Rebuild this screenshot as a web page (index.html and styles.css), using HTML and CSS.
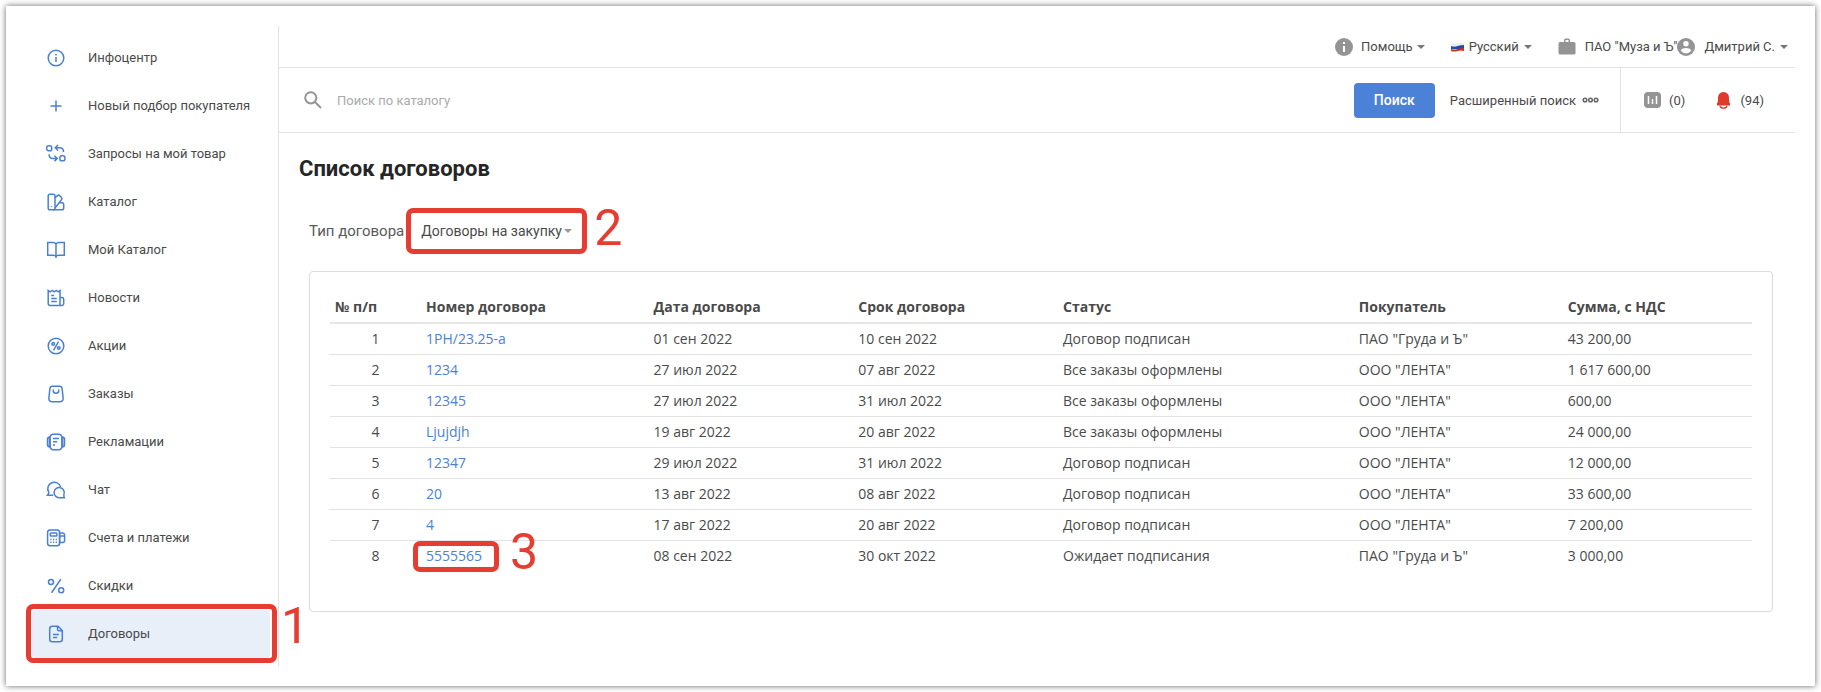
FILE: index.html
```html
<!DOCTYPE html>
<html lang="ru">
<head>
    <meta charset="UTF-8">
    <meta name="viewport" content="width=device-width, initial-scale=1.0">
    <title>Список договоров</title>
    <link rel="stylesheet" href="styles.css">
</head>
<body>
    <div class="window">
        <nav class="sidebar">
            <a class="nav-item" href="#">
                <svg class="nav-icon" viewBox="0 0 20 20"><circle cx="10" cy="10" r="7.8"/><path d="M10 9v5M10 6v1.4"/></svg>
                <span class="nav-text">Инфоцентр</span>
            </a>
            <a class="nav-item" href="#">
                <svg class="nav-icon" viewBox="0 0 20 20"><path d="M10 4.5v11M4.5 10h11"/></svg>
                <span class="nav-text">Новый подбор покупателя</span>
            </a>
            <a class="nav-item" href="#">
                <svg class="nav-icon" viewBox="0 0 20 20"><rect x="0.7" y="1.7" width="5" height="5" rx="1.8"/><rect x="13.9" y="11.8" width="5" height="5" rx="1.8"/><path d="M12 1L9.3 3.8 12 6.500M9.500 3.800h4q4 0 4 4.200M3 10.200q0 4.200 4 4.200h4M8.500 11.700l2.700 2.700-2.700 2.700"/></svg>
                <span class="nav-text">Запросы на мой товар</span>
            </a>
            <a class="nav-item" href="#">
                <svg class="nav-icon" viewBox="0 0 20 20"><rect x="2.200" y="2.200" width="6.800" height="15.600" rx="1.800"/><path d="M9 5.800l2.500-2.200q1.200-1 2.200.1l1.800 1.900q.9 1.100 0 2.200L9 16M13.500 10.800h2.600q1.600 0 1.600 1.600v3.600q0 1.800-1.800 1.800H7M5.500 14v.8"/></svg>
                <span class="nav-text">Каталог</span>
            </a>
            <a class="nav-item" href="#">
                <svg class="nav-icon" viewBox="0 0 20 20"><path d="M10 4Q9 2.500 7 2.500H1.700v12.700H7.500Q9.300 15.200 10 16.500 10.700 15.200 12.500 15.200h5.800V2.500H13Q11 2.500 10 4zM10 4v14"/></svg>
                <span class="nav-text">Мой Каталог</span>
            </a>
            <a class="nav-item" href="#">
                <svg class="nav-icon" viewBox="0 0 20 20"><path d="M14 17.500H4.500q-2.300 0-2.300-2.300V2.500l2 1.400 2-1.400 2 1.400 2-1.400 2 1.400 1.800-1.400v15M14 9.500h2q1.700 0 1.700 1.700v4.600q0 1.700-1.700 1.700h-2M5.200 7.500h3M5.200 10.500h5.600M5.200 13.500h5.600"/></svg>
                <span class="nav-text">Новости</span>
            </a>
            <a class="nav-item" href="#">
                <svg class="nav-icon" viewBox="0 0 20 20"><circle cx="10" cy="10" r="7.800"/><path d="M12.500 5.700l-5 8.600"/><circle cx="7.200" cy="7.900" r="1.300"/><circle cx="12.800" cy="12" r="1.300"/></svg>
                <span class="nav-text">Акции</span>
            </a>
            <a class="nav-item" href="#">
                <svg class="nav-icon" viewBox="0 0 20 20"><path d="M6.500 2.200h7q2.300 0 2.600 2.300l1 9.300q.4 4-3.400 4H6.300q-3.800 0-3.400-4l1-9.300q.3-2.300 2.600-2.300zM7.300 5.500v1.300q0 2.500 2.700 2.500t2.700-2.500V5.500"/></svg>
                <span class="nav-text">Заказы</span>
            </a>
            <a class="nav-item" href="#">
                <svg class="nav-icon" viewBox="0 0 20 20"><path class="tint" d="M4 5q-2.500 0-2.500 2.500v5Q1.500 15 4 15zM16 5q2.500 0 2.500 2.500v5q0 2.500-2.500 2.500z"/><path d="M6.500 2.200h7Q16 3.200 16 5.200v9.600q0 2-2.500 3h-7Q4 16.800 4 14.800V5.200q0-2 2.500-3zM7 6.500h6M7 9.800h4.200M7 13h2"/></svg>
                <span class="nav-text">Рекламации</span>
            </a>
            <a class="nav-item" href="#">
                <svg class="nav-icon" viewBox="0 0 20 20"><path d="M14.700 7A6.600 6.600 0 1 0 2.700 12.200v1.300L1.500 15.200h5.800M18.400 17.700h-5.200a5.100 5.100 0 1 1 4.700-3.200v1.900z"/></svg>
                <span class="nav-text">Чат</span>
            </a>
            <a class="nav-item" href="#">
                <svg class="nav-icon" viewBox="0 0 20 20"><rect x="1.600" y="2" width="12" height="15.800" rx="2.500"/><rect x="4.300" y="5" width="6.600" height="3" rx=".8"/><path d="M13.600 5h3.400q1.600.4 1.600 2v5.500q0 2-2 2h-3zM13.600 8h4.800"/><path d="M4.300 11.500h1.200M7 11.500h1.200M9.700 11.500h1.200M4.300 14.300h1.200M7 14.300h1.200M9.700 14.300h1.200"/></svg>
                <span class="nav-text">Счета и платежи</span>
            </a>
            <a class="nav-item" href="#">
                <svg class="nav-icon" viewBox="0 0 20 20"><circle cx="5" cy="6" r="2.500"/><circle cx="15.200" cy="14.300" r="2.500"/><path d="M14.800 3.300L5.500 16.800"/></svg>
                <span class="nav-text">Скидки</span>
            </a>
            <a class="nav-item active" href="#">
                <svg class="nav-icon" viewBox="0 0 20 20"><path d="M12 2.200H6.200q-2.500 0-2.500 2.500v10.600q0 2.500 2.500 2.500h7.600q2.500 0 2.500-2.500V6.500zM11.500 2.500v2.700q0 1.600 1.600 1.600h3M7 10.500h6M7 13.600h4.200"/></svg>
                <span class="nav-text">Договоры</span>
                <span class="mark mark-nav"></span>
                <span class="mark-number number-nav">1</span>
            </a>
        </nav>

        <main class="main">
            <header class="topbar">
                <button class="top-button help">
                    <svg class="top-icon" viewBox="0 0 18 18"><circle cx="9" cy="9" r="9"/><path fill="#fff" d="M8 4h2v2H8zM8 8h2v6H8z"/></svg>
                    <span>Помощь</span>
                    <span class="caret"></span>
                </button>
                <button class="top-button language">
                    <svg class="flag" viewBox="0 0 13 10"><path fill="#eee" d="M0 1q3 1 6.500 0T13 1v3H0z"/><path fill="#1f4fa3" d="M0 4q3 1 6.500 0T13 3v4H0z"/><path fill="#d52b1e" d="M0 7q3 1 6.500 0T13 6v3q-3-1-6.500 0T0 9z"/></svg>
                    <span>Русский</span>
                    <span class="caret"></span>
                </button>
                <button class="top-button company">
                    <svg class="top-icon" viewBox="0 0 18 18"><path fill-rule="evenodd" d="M6 4V2q0-1.500 1.500-1.500h3Q12 .5 12 2v2h4q1.500 0 1.500 1.500V15q0 1.500-1.500 1.500H2Q.5 16.500.5 15V5.500Q.5 4 2 4zM7.500 4h3V2h-3z"/></svg>
                    <span>ПАО "Муза и Ъ"</span>
                </button>
                <button class="top-button user">
                    <svg class="top-icon" viewBox="0 0 18 18"><circle cx="9" cy="9" r="9"/><circle cx="9" cy="5.700" r="2.700" fill="#fff"/><path fill="#fff" d="M3.600 12.200Q5.200 9.900 9 9.900t5.400 2.300Q12.500 15.300 9 15.300t-5.400-3.100z"/></svg>
                    <span>Дмитрий С.</span>
                    <span class="caret"></span>
                </button>
            </header>

            <div class="searchbar">
                <form class="search">
                    <label for="search"><svg class="search-icon" viewBox="0 0 18 18"><circle cx="6.800" cy="6.800" r="5.600"/><path d="M11 11l6 6"/></svg></label>
                    <input class="search-input" id="search" type="text" placeholder="Поиск по каталогу" aria-label="Поиск по каталогу">
                    <button class="search-button" type="button">Поиск</button>
                    <a class="advanced" href="#">
                        <span>Расширенный поиск</span>
                        <svg class="dots" viewBox="0 0 17 6"><circle cx="3" cy="3" r="1.800"/><circle cx="8.500" cy="3" r="1.800"/><circle cx="14" cy="3" r="1.800"/></svg>
                    </a>
                </form>
                <div class="counters">
                    <a class="counter" href="#">
                        <svg class="counter-icon" viewBox="0 0 17 17"><rect width="17" height="16" rx="4"/><path stroke="#fff" stroke-width="1.500" d="M4.500 4v8M8.500 7v5M12.500 4v8"/></svg>
                        <span>(0)</span>
                    </a>
                    <a class="counter" href="#">
                        <svg class="counter-icon bell" viewBox="0 0 17 17"><path d="M8.500 0q5.500.3 5.500 6 0 4.500 1 5.500v2H2v-2q1-1 1-5.500Q3 .3 8.500 0z"/><path class="clapper" d="M5 14q.6 2.200 3.500 2.200T12 14"/></svg>
                        <span>(94)</span>
                    </a>
                </div>
            </div>

            <section class="content">
                <h1 class="title">Список договоров</h1>
                <div class="filter">
                    <label for="type">Тип договора</label>
                    <div class="select-wrap">
                        <select class="select" id="type">
                            <option>Договоры на закупку</option>
                        </select>
                        <span class="caret"></span>
                        <span class="mark mark-select"></span>
                        <span class="mark-number number-select">2</span>
                    </div>
                </div>

                <div class="panel">
                    <table class="contracts">
                        <colgroup>
                            <col class="col-index">
                            <col class="col-number">
                            <col class="col-date">
                            <col class="col-date">
                            <col class="col-status">
                            <col class="col-buyer">
                            <col>
                        </colgroup>
                        <thead>
                            <tr><th>№ п/п</th><th>Номер договора</th><th>Дата договора</th><th>Срок договора</th><th>Статус</th><th>Покупатель</th><th>Сумма, с НДС</th></tr>
                        </thead>
                        <tbody>
                            <tr><td>1</td><td><a href="#">1PH/23.25-a</a></td><td>01 сен 2022</td><td>10 сен 2022</td><td>Договор подписан</td><td>ПАО "Груда и Ъ"</td><td>43 200,00</td></tr>
                            <tr><td>2</td><td><a href="#">1234</a></td><td>27 июл 2022</td><td>07 авг 2022</td><td>Все заказы оформлены</td><td>ООО "ЛЕНТА"</td><td>1 617 600,00</td></tr>
                            <tr><td>3</td><td><a href="#">12345</a></td><td>27 июл 2022</td><td>31 июл 2022</td><td>Все заказы оформлены</td><td>ООО "ЛЕНТА"</td><td>600,00</td></tr>
                            <tr><td>4</td><td><a href="#">Ljujdjh</a></td><td>19 авг 2022</td><td>20 авг 2022</td><td>Все заказы оформлены</td><td>ООО "ЛЕНТА"</td><td>24 000,00</td></tr>
                            <tr><td>5</td><td><a href="#">12347</a></td><td>29 июл 2022</td><td>31 июл 2022</td><td>Договор подписан</td><td>ООО "ЛЕНТА"</td><td>12 000,00</td></tr>
                            <tr><td>6</td><td><a href="#">20</a></td><td>13 авг 2022</td><td>08 авг 2022</td><td>Договор подписан</td><td>ООО "ЛЕНТА"</td><td>33 600,00</td></tr>
                            <tr><td>7</td><td><a href="#">4</a></td><td>17 авг 2022</td><td>20 авг 2022</td><td>Договор подписан</td><td>ООО "ЛЕНТА"</td><td>7 200,00</td></tr>
                            <tr><td>8</td><td><a class="marked-link" href="#">5555565<span class="mark mark-link"></span><span class="mark-number number-link">3</span></a></td><td>08 сен 2022</td><td>30 окт 2022</td><td>Ожидает подписания</td><td>ПАО "Груда и Ъ"</td><td>3 000,00</td></tr>
                        </tbody>
                    </table>
                </div>
            </section>
        </main>
    </div>
</body>
</html>
```
FILE: styles.css
```css
* { box-sizing: border-box; }
body {
    margin: 0;
    padding: 6px;
    background: white;
    font-family: Roboto, "Liberation Sans", sans-serif;
    font-size: 13px;
    color: #4a4a4a;
}
a { color: inherit; text-decoration: none; }
button, input, select {
    font: inherit;
    color: inherit;
    border: none;
    background: none;
    padding: 0;
}
button { cursor: pointer; }
svg { display: block; flex: none; }
.window {
    display: flex;
    padding: 20px 20px 20px 26px;
    background: white;
    box-shadow: 0 0 6px rgba(0, 0, 0, 0.6);
}

/* sidebar */
.sidebar {
    flex: none;
    width: 247px;
    padding: 8px 8px 8px 0;
    border-right: 1px solid #e2e2e2;
}
.nav-item {
    position: relative;
    display: flex;
    align-items: center;
    gap: 22px;
    height: 48px;
    padding-left: 14px;
    border-radius: 4px;
}
.nav-item.active { background: #e8eff9; }
.nav-text { padding-bottom: 2px; }
.nav-icon {
    width: 20px;
    height: 20px;
    fill: none;
    stroke: #4a80d4;
    stroke-width: 1.5;
}
.tint { fill: #b5cbee; }

/* top line */
.main { flex: 1; min-width: 0; }
.topbar {
    display: flex;
    justify-content: flex-end;
    align-items: center;
    height: 42px;
    padding-right: 7px;
    border-bottom: 1px solid #e2e2e2;
}
.top-button { display: flex; align-items: center; gap: 8px; }
.top-icon { width: 18px; height: 18px; fill: #949494; }
.company { gap: 9px; }
.user { gap: 9px; }
.help, .language { margin-right: 26px; }
.language { gap: 5px; }
.flag { width: 13px; height: 10px; }
.caret {
    border: 4px solid transparent;
    border-top-color: #777;
    border-bottom: none;
}
.help .caret, .user .caret { margin-left: -4px; }

/* search */
.searchbar {
    display: flex;
    height: 65px;
    border-bottom: 1px solid #e2e2e2;
}
.search {
    flex: 1;
    display: flex;
    align-items: center;
    padding: 0 21px 0 25px;
}
.search-icon {
    width: 18px;
    height: 18px;
    fill: none;
    stroke: #949494;
    stroke-width: 2;
}
.search-input { flex: 1; margin-left: 15px; height: 35px; outline: none; }
.search-input::placeholder { color: #aaa; opacity: 1; }
.search-button {
    width: 81px;
    height: 35px;
    border-radius: 4px;
    background: #4b82d7;
    color: white;
    font-size: 14px;
    font-weight: 500;
}
.advanced { display: flex; align-items: center; gap: 6px; margin-left: 15px; }
.dots { width: 17px; height: 6px; fill: none; stroke: #666; stroke-width: 1.5; }
.counters {
    display: flex;
    align-items: center;
    gap: 30px;
    padding: 0 31px 0 23px;
    border-left: 1px solid #e2e2e2;
}
.counter { display: flex; align-items: center; gap: 8px; }
.counter-icon { width: 17px; height: 17px; fill: #949494; }
.bell { fill: #e03a2f; }
.clapper { fill: none; stroke: #e03a2f; stroke-width: 1.3; }

/* content */
.content { padding: 21px 22px 0 20px; }
.title {
    margin: 0 0 27px;
    font-size: 22px;
    line-height: 30px;
    font-weight: 700;
    color: #262626;
}
.filter {
    display: flex;
    align-items: center;
    gap: 17px;
    height: 40px;
    margin: 0 0 20px 10px;
    font-size: 15px;
    color: #5a5a5a;
}
.select-wrap {
    position: relative;
    display: flex;
    align-items: center;
    font-size: 14px;
    color: #4a4a4a;
}
.select { appearance: none; height: 30px; padding-right: 10px; outline: none; }
.select-wrap > .caret { margin-left: -8px; border-top-color: #999; pointer-events: none; }
.panel {
    margin-left: 10px;
    padding: 20px 20px 40px;
    border: 1px solid #dcdcdc;
    border-radius: 4px;
}
.contracts {
    width: 100%;
    table-layout: fixed;
    border-spacing: 0;
    font-family: "Open Sans", sans-serif;
    font-size: 14px;
    line-height: 20px;
}
.col-index { width: 6.4%; }
.col-number { width: 16%; }
.col-date { width: 14.4%; }
.col-status { width: 20.8%; }
.col-buyer { width: 14.7%; }
.contracts th, .contracts td { padding: 5px; text-align: left; }
.contracts th { border-bottom: 2px solid #e6e6e6; font-weight: 700; }
.contracts td { border-bottom: 1px solid #e2e2e2; }
.contracts td:first-child { text-align: center; }
.contracts tr:last-child td { border-bottom: none; }
.contracts a { color: #4b82d7; }

/* red step marks */
.marked-link { position: relative; display: inline-block; }
.mark {
    position: absolute;
    border: 5px solid #e63c31;
    border-radius: 7px;
    pointer-events: none;
}
.contracts .mark-number, .mark-number {
    position: absolute;
    font-family: Roboto, "Liberation Sans", sans-serif;
    font-size: 50px;
    line-height: 50px;
    color: #e63c31;
}
.mark-nav { inset: -6px -7px -5px -6px; }
.number-nav { left: 249px; top: -9px; }
.mark-select { inset: -8px -15px; }
.number-select { left: calc(100% + 22px); top: -13px; }
.mark-link { inset: -5px -17px -6px -13px; }
.number-link { left: calc(100% + 28px); top: -19px; }
```
